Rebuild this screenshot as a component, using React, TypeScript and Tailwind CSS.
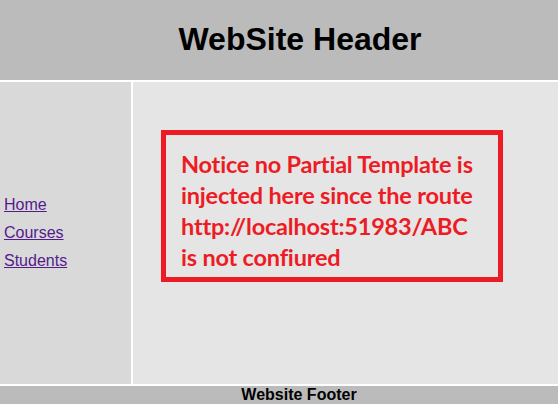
export default function App() {
  return (
    <div className="w-[558px] h-[404px] flex flex-col bg-white" style={{ fontFamily: '"Liberation Sans", Arial, sans-serif' }}>
      <header className="h-[80px] shrink-0 bg-[#bbbbbb] flex items-center justify-center pl-[42px] pb-[2px]">
        <h1 className="text-[32px] font-bold text-black leading-none">WebSite Header</h1>
      </header>
      <div className="h-[302px] shrink-0 mt-[2px] flex">
        <nav className="w-[131px] shrink-0 bg-[#d9d9d9] flex flex-col justify-center pl-[4px] text-[16px] leading-[28px]">
          <a href="#" className="underline text-[#551a8b] w-fit">Home</a>
          <a href="#" className="underline text-[#551a8b] w-fit">Courses</a>
          <a href="#" className="underline text-[#551a8b] w-fit">Students</a>
        </nav>
        <main className="flex-1 ml-[2px] bg-[#e5e5e5] pt-[48px] pl-[28px]">
          <div className="w-[342px] h-[152px] border-[5px] border-[#ed1c24] pl-[15px] pt-[14px]">
            <p
              className="text-[#ed1c24] font-bold text-[23.5px] leading-[31px] tracking-[-0.2px] whitespace-nowrap"
              style={{ fontFamily: 'Lato, "Open Sans", sans-serif' }}
            >
              Notice no Partial Template is
              <br />
              injected here since the route
              <br />
              http://localhost:51983/ABC
              <br />
              is not confiured
            </p>
          </div>
        </main>
      </div>
      <footer className="h-[18px] mt-[2px] bg-[#bbbbbb] flex items-center justify-center pl-[40px]">
        <span className="text-[16px] font-bold text-black leading-none">Website Footer</span>
      </footer>
    </div>
  );
}
